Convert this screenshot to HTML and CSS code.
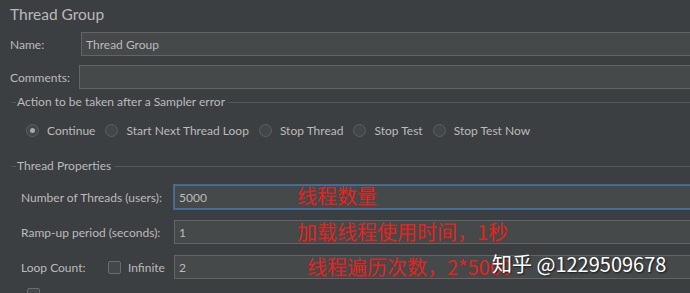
FILE: index.html
```html
<!DOCTYPE html>
<html lang="en">
<head>
<meta charset="UTF-8">
<meta name="viewport" content="width=device-width, initial-scale=1.0">
<title>Thread Group</title>
<link rel="stylesheet" href="styles.css">
</head>
<body>
  <div class="panel">
    <div class="title">Thread Group</div>

    <div class="row row-name">
      <span class="label label-name">Name:</span>
      <div class="field"><span class="value">Thread Group</span></div>
    </div>
    <div class="row row-comments">
      <span class="label label-comments">Comments:</span>
      <div class="field"></div>
    </div>

    <div class="group-title group-action">Action to be taken after a Sampler error</div>
    <div class="radios">
      <label class="radio radio-checked"><span class="dot"></span>Continue</label>
      <label class="radio"><span class="dot"></span>Start Next Thread Loop</label>
      <label class="radio"><span class="dot"></span>Stop Thread</label>
      <label class="radio"><span class="dot"></span>Stop Test</label>
      <label class="radio"><span class="dot"></span>Stop Test Now</label>
    </div>

    <div class="group-title group-props">Thread Properties</div>
    <div class="prop prop-threads">
      <span class="prop-label">Number of Threads (users):</span>
      <div class="field field-focus">
        <span class="value">5000</span>
        <span class="note note-1">线程数量</span>
      </div>
    </div>
    <div class="prop">
      <span class="prop-label">Ramp-up period (seconds):</span>
      <div class="field">
        <span class="value">1</span>
        <span class="note note-2">加载线程使用时间，1秒</span>
      </div>
    </div>
    <div class="prop">
      <span class="prop-label loop-label">Loop Count:</span>
      <span class="check"></span>
      <span class="infinite">Infinite</span>
      <div class="field">
        <span class="value">2</span>
        <span class="note note-3">线程遍历次数，2*5000</span>
      </div>
    </div>
    <div class="bottom-row"><span class="check"></span></div>
  </div>

  <div class="watermark">知乎 @1229509678</div>
</body>
</html>
```

FILE: styles.css
```css
body {
  margin: 0;
  background-color: #3c3f41;
  color: #bbbbbb;
  font-family: Lato, "Noto Sans", sans-serif;
  font-size: 12px;
  height: 293px;
  overflow: hidden;
  position: relative;
}

.panel {
  display: flex;
  flex-direction: column;
}

.title {
  height: 28px;
  line-height: 28px;
  padding-left: 10px;
  font-size: 15.5px;
  color: #b9b9b9;
}

.row {
  display: flex;
  align-items: center;
  height: 24px;
  padding-left: 10px;
  margin-right: -4px;
}

.row-name {
  margin-top: 4px;
}

.row-comments {
  margin-top: 9px;
}

.label,
.prop-label,
.infinite,
.radio {
  flex-shrink: 0;
  white-space: nowrap;
}

.label-name {
  width: 71px;
}

.label-comments {
  width: 69px;
}

.field {
  flex: 1;
  position: relative;
  height: 24px;
  box-sizing: border-box;
  background-color: #45494a;
  border: 1px solid #646464;
  display: flex;
  align-items: center;
  padding-left: 4px;
}

.field-focus {
  border-color: #4a6e96;
  box-shadow: 0 0 0 1px #46698e;
}

.value {
  color: #bbbbbb;
}

.group-title {
  display: flex;
  align-items: center;
  height: 14px;
  line-height: 14px;
  padding-left: 12px;
}

.group-title::before {
  content: "";
  width: 4px;
  height: 1px;
  margin-right: 1px;
  background-color: #56595b;
}

.group-title::after {
  content: "";
  flex: 1;
  height: 1px;
  margin-left: 3px;
  background-color: #56595b;
}

.group-action {
  margin-top: 6px;
}

.group-props {
  margin-top: 19px;
}

.radios {
  display: flex;
  align-items: center;
  height: 20px;
  margin-top: 11px;
  padding-left: 26px;
  gap: 10px;
}

.radio {
  display: flex;
  align-items: center;
  gap: 8px;
}

.dot {
  width: 13px;
  height: 13px;
  box-sizing: border-box;
  border-radius: 50%;
  border: 1px solid #5c5f61;
  background-color: #43474a;
  display: flex;
  align-items: center;
  justify-content: center;
}

.radio-checked .dot::after {
  content: "";
  width: 5px;
  height: 5px;
  border-radius: 50%;
  background-color: #a9a9a9;
}

.prop {
  display: flex;
  align-items: center;
  height: 24px;
  margin-top: 11px;
  padding-left: 21px;
  margin-right: -4px;
}

.prop-threads {
  margin-top: 12px;
}

.prop-label {
  width: 153px;
}

.loop-label {
  width: 87px;
}

.check {
  flex-shrink: 0;
  width: 13px;
  height: 13px;
  box-sizing: border-box;
  border: 1px solid #6b6b6b;
  border-radius: 2px;
  background-color: #43474a;
}

.infinite {
  width: 46px;
  margin-left: 7px;
}

.note {
  position: absolute;
  top: -3px;
  font-family: "Noto Sans CJK SC", sans-serif;
  font-size: 20px;
  line-height: 26px;
  color: #e3231f;
  white-space: nowrap;
}

.note-1 {
  left: 122px;
}

.note-2 {
  left: 122px;
  top: -2px;
}

.note-3 {
  left: 132px;
  top: -2px;
}

.bottom-row {
  display: flex;
  margin-top: 9px;
  padding-left: 27px;
}

.watermark {
  position: absolute;
  left: 492px;
  top: 250px;
  font-family: "Noto Sans CJK SC", sans-serif;
  font-size: 20px;
  line-height: 28px;
  color: #ffffff;
  text-shadow: 1px 1px 2px rgba(0, 0, 0, 0.7);
  white-space: nowrap;
}
```
